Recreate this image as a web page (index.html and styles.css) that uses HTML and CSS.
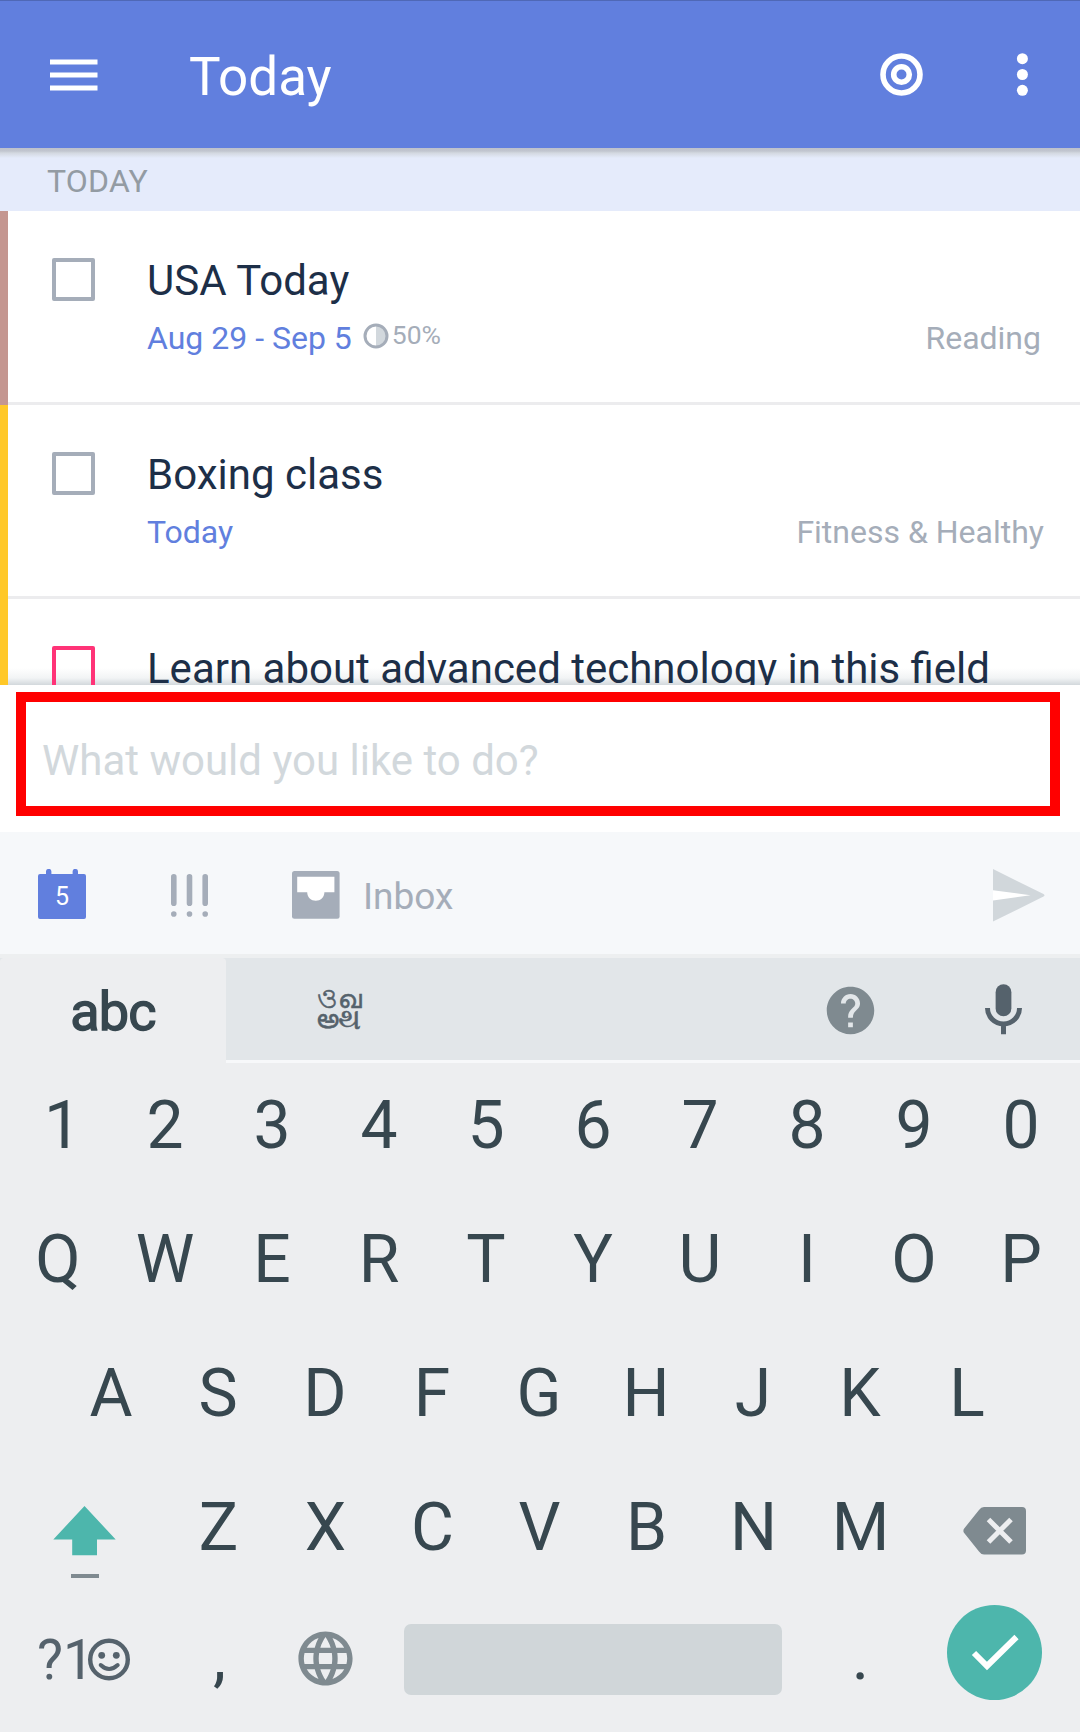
FILE: index.html
```html
<!DOCTYPE html>
<html lang="en">
<head>
<meta charset="utf-8">
<title>Today</title>
<link rel="stylesheet" href="styles.css">
</head>
<body>
<div class="screen">
  <header class="appbar">
    <svg class="menu-icon" width="48" height="32" viewBox="0 0 48 32"><path d="M0 .5h47.500v5H0zM0 13.500h47.500v5H0zM0 26.500h47.500v5H0z" fill="#fff"/></svg>
    <h1 class="title">Today</h1>
    <svg class="focus-icon" width="44" height="44" viewBox="-22.500 -21.500 44 44" fill="none" stroke="#fff" stroke-width="5.600"><circle r="18.500"/><circle r="7.800"/></svg>
    <svg class="more-icon" width="12" height="44" viewBox="-6.400 -21.500 12 44" fill="#fff"><circle cy="-15.800" r="5.500"/><circle r="5.500"/><circle cy="15.800" r="5.500"/></svg>
  </header>

  <main class="list">
    <h2 class="section">TODAY</h2>
    <article class="task task-rose">
      <span class="checkbox"></span>
      <div class="task-body">
        <p class="task-title">USA Today</p>
        <div class="meta">
          <span class="date">Aug 29 - Sep 5</span>
          <svg class="progress-icon" width="26" height="26" viewBox="-13 -13 26 26"><path d="M0-11a11 11 0 0 1 0 22z" fill="#d2d8dd"/><circle r="11" fill="none" stroke="#a5adb9" stroke-width="3"/></svg>
          <span class="percent">50%</span>
          <span class="project project-inset">Reading</span>
        </div>
      </div>
    </article>
    <article class="task task-yellow">
      <span class="checkbox"></span>
      <div class="task-body">
        <p class="task-title">Boxing class</p>
        <div class="meta">
          <span class="date">Today</span>
          <span class="project">Fitness &amp; Healthy</span>
        </div>
      </div>
    </article>
    <article class="task task-yellow task-last">
      <span class="checkbox checkbox-high"></span>
      <div class="task-body">
        <p class="task-title">Learn about advanced technology in this field</p>
      </div>
    </article>
  </main>

  <section class="composer">
    <div class="field">What would you like to do?</div>
  </section>

  <div class="toolbar">
    <div class="calendar">
      <svg width="48" height="50" viewBox="0 0 48 50"><path d="M2 5h6V2.600a2.600 2.600 0 0 1 5.400 0V5h21.200V2.600a2.600 2.600 0 0 1 5.400 0V5h6a2 2 0 0 1 2 2v41a2 2 0 0 1-2 2H2a2 2 0 0 1-2-2V7a2 2 0 0 1 2-2z" fill="#617fde"/></svg>
      <span class="day">5</span>
    </div>
    <svg class="priority" width="37" height="43" viewBox="0 0 37 43" stroke="#a5adb9" stroke-width="5.600" stroke-linecap="round"><path d="M2.800 2.800V29.200M18.500 2.800V29.200M34.200 2.800V29.200M2.800 40v.01M18.500 40v.01M34.200 40v.01"/></svg>
    <svg class="tray" width="48" height="48" viewBox="0 0 48 48"><rect width="47.600" height="47.700" rx="2.500" fill="#a5adb9"/><path d="M5.200 5.800h37.200v15.500h-10c0 5-4 8.500-8.600 8.500s-8.600-3.500-8.600-8.500h-10z" fill="#fff"/></svg>
    <span class="inbox">Inbox</span>
    <svg class="send" width="52" height="53" viewBox="0 0 52 53"><path d="M0 0L50.500 25q2 1.300 0 2.600L0 52.600z" fill="#d1d7db"/><path d="M0 21.200L37.500 26.300 0 31.400z" fill="#fff"/></svg>
  </div>

  <section class="keyboard">
    <div class="tabs">
      <div class="tab-latin">abc</div>
      <div class="tab-rest">
        <div class="indic"><span class="wide">ও</span><span>ഖ</span><span class="wide">అ</span><span class="tall">થ</span></div>
        <svg class="help" width="57" height="57" viewBox="0 0 24 24"><path fill="#7f8a90" d="M12 2C6.480 2 2 6.480 2 12s4.480 10 10 10 10-4.480 10-10S17.520 2 12 2zm1 17h-2v-2h2v2zm2.070-7.750l-.9.920C13.450 12.900 13 13.500 13 15h-2v-.5c0-1.100.45-2.100 1.170-2.830l1.240-1.260c.37-.36.590-.86.590-1.410 0-1.100-.9-2-2-2s-2 .9-2 2H8c0-2.210 1.790-4 4-4s4 1.790 4 4c0 .88-.36 1.680-.93 2.250z"/></svg>
        <svg class="mic" width="63" height="63" viewBox="0 0 24 24" fill="none" stroke="#55626c"><rect x="9" y="2" width="6" height="12.200" rx="3" fill="#55626c" stroke="none"/><path d="M5.900 11a6.100 6.100 0 0 0 12.200 0M12 17v4" stroke-width="1.900"/></svg>
      </div>
    </div>
    <div class="keys">
      <div class="row row-10"><span class="one">1</span><span>2</span><span>3</span><span>4</span><span>5</span><span>6</span><span>7</span><span>8</span><span>9</span><span>0</span></div>
      <div class="row row-10"><span>Q</span><span>W</span><span>E</span><span>R</span><span>T</span><span>Y</span><span>U</span><span>I</span><span>O</span><span>P</span></div>
      <div class="row row-9"><span>A</span><span>S</span><span>D</span><span>F</span><span>G</span><span>H</span><span>J</span><span>K</span><span>L</span></div>
      <div class="row row-shift">
        <span class="shift"><svg width="64" height="74" viewBox="0 0 64 74"><path d="M31.500 0L62.700 33.500H44V49.200H19.200V33.500H.3z" fill="#4db6ac"/><path d="M18 68h28v4h-28z" fill="#7f8a90"/></svg></span>
        <span>Z</span><span>X</span><span>C</span><span>V</span><span>B</span><span>N</span><span>M</span>
        <span><svg class="backspace" width="64" height="48" viewBox="0 0 64 48"><path d="M21 0H59q4 0 4 4V43.500q0 4-4 4H21q-3 0-5-3L.8 25.500Q0 24 .8 22L16 3q2-3 5-3z" fill="#7f8a90"/><path d="M25.500 12.500L48 35M48 12.500L25.500 35" stroke="#edeef0" stroke-width="5"/></svg></span>
      </div>
      <div class="row row-bottom">
        <span class="symbols">?1<svg width="42" height="43" viewBox="-21 -21.500 42 43" fill="none" stroke="#55626c"><circle r="18.800" stroke-width="4.400"/><path d="M-8.300 5.500q8.300 8 17 0" stroke-width="4" stroke-linecap="round"/><circle cx="-7.300" cy="-4.200" r="3.400" fill="#55626c" stroke="none"/><circle cx="7.300" cy="-4.200" r="3.400" fill="#55626c" stroke="none"/></svg></span>
        <span class="comma">,</span>
        <span class="globe"><svg width="65" height="65" viewBox="0 0 24 24"><path fill="#7f8a90" d="M11.990 2C6.470 2 2 6.480 2 12s4.470 10 9.990 10C17.520 22 22 17.520 22 12S17.520 2 11.990 2zm6.930 6h-2.950c-.32-1.250-.78-2.450-1.380-3.560 1.840.63 3.370 1.910 4.330 3.560zM12 4.040c.83 1.200 1.480 2.530 1.910 3.960h-3.820c.43-1.430 1.080-2.760 1.910-3.960zM4.260 14C4.100 13.360 4 12.690 4 12s.1-1.360.26-2h3.380c-.08.66-.14 1.320-.14 2 0 .68.060 1.340.14 2H4.260zm.82 2h2.950c.32 1.250.78 2.450 1.380 3.560-1.840-.63-3.370-1.900-4.330-3.560zm2.950-8H5.080c.96-1.660 2.490-2.930 4.330-3.560C8.810 5.550 8.350 6.750 8.030 8zM12 19.960c-.83-1.200-1.480-2.530-1.910-3.960h3.820c-.43 1.430-1.080 2.760-1.910 3.960zM14.340 14H9.660c-.09-.66-.16-1.320-.16-2 0-.68.070-1.350.16-2h4.680c.09.65.16 1.320.16 2 0 .68-.07 1.340-.16 2zm.25 5.560c.6-1.110 1.060-2.310 1.380-3.560h2.950c-.96 1.650-2.490 2.930-4.330 3.560zM16.360 14c.08-.66.14-1.320.14-2 0-.68-.06-1.340-.14-2h3.380c.16.64.26 1.310.26 2s-.1 1.360-.26 2h-3.380z"/></svg></span>
        <span class="space"></span>
        <span class="period">.</span>
        <span class="enter"><svg width="95" height="95" viewBox="-47.500 -47.500 95 95"><circle r="47.500" fill="#4db6ac"/><path d="M-20.500.5L-7.500 13.500 22-15.500" fill="none" stroke="#fff" stroke-width="6"/></svg></span>
      </div>
    </div>
  </section>
</div>
</body>
</html>
```
FILE: styles.css
```css
* { box-sizing: border-box; }

body {
  margin: 0;
  font-family: Roboto, "Liberation Sans", sans-serif;
  background: #edeef0;
}

h1, h2, p { margin: 0; font-weight: 400; }
svg { display: block; flex: none; }

.screen {
  width: 1080px;
  height: 1732px;
  overflow: hidden;
  display: flex;
  flex-direction: column;
}

/* App bar */
.appbar {
  flex: none;
  height: 148px;
  padding: 0 52px 0 50px;
  display: flex;
  align-items: center;
  background: #617fde;
  border-top: 1px solid #4f68b6;
}
.title {
  margin: 5px auto 0 91px;
  color: #fff;
  font-size: 53px;
  line-height: 62px;
}
.more-icon { margin-left: 93px; }

/* Task list */
.list {
  flex: none;
  height: 537px;
  overflow: hidden;
  background: linear-gradient(#fff 520px, #f2f4f5 530px, #d2d8dc 537px);
}
.section {
  height: 63px;
  padding: 14px 0 0 47px;
  font-size: 32px;
  line-height: 38px;
  letter-spacing: .2px;
  color: #939ba3;
  background: linear-gradient(#bdc1cc 0, #c1c5cf 3px, #d3d8e0 5px, #e5ebfb 10px);
}
.task {
  height: 194px;
  display: flex;
  border-left: 8px solid;
}
.task-rose { border-color: #c49690; }
.task-yellow { border-color: #ffc828; }
.checkbox {
  flex: none;
  width: 43px;
  height: 43px;
  margin: 47px 0 0 44px;
  border: 4px solid #a5adb9;
  border-radius: 2px;
}
.checkbox-high { border-color: #ff3377; }
.task-body {
  flex: 1;
  height: 194px;
  margin-left: -87px;
  padding: 45px 36px 0 139px;
  border-bottom: 3px solid #ececee;
}
.task-last .task-body { border-bottom: 0; }
.task-title {
  color: #1d2f48;
  font-size: 42px;
  line-height: 50px;
  white-space: nowrap;
}
.meta {
  display: flex;
  align-items: center;
  margin-top: 13px;
  font-size: 32px;
  line-height: 38px;
}
.date { color: #617fde; }
.progress-icon { margin: -5px 3px 0 11px; }
.percent {
  margin-top: -7px;
  font-size: 26.500px;
  color: #a5adb9;
}
.project { margin-left: auto; color: #a5adb9; }
.project-inset { margin-right: 3px; }

/* New task field */
.composer {
  flex: none;
  height: 147px;
  padding: 7px 20px 16px 16px;
  background: #fff;
}
.field {
  height: 124px;
  padding: 6px 16px 0;
  border: 10px solid #f00;
  font-size: 42px;
  line-height: 105px;
  color: #d2d8dc;
}

.toolbar {
  flex: none;
  height: 126px;
  padding: 0 34.600px 0 38px;
  display: flex;
  align-items: flex-start;
  background: #f6f8fa;
  border-bottom: 4px solid #edeff0;
}
.calendar { margin-top: 37px; display: grid; }
.calendar > * { grid-area: 1 / 1; }
.day {
  padding-top: 13px;
  text-align: center;
  color: #fff;
  font-size: 25px;
  line-height: 30px;
}
.priority { margin: 42px 0 0 85px; }
.tray { margin: 39px 0 0 84px; }
.inbox {
  margin: 43px 0 0 23px;
  font-size: 37px;
  line-height: 44px;
  color: #a5adb9;
}
.send { margin: 37px 0 0 auto; }

/* Keyboard */
.keyboard { flex: 1; color: #37474f; background: #edeef0; }
.tabs { height: 105px; display: flex; background: #e2e6e9; }
.tab-latin {
  width: 226px;
  text-align: center;
  font-size: 54px;
  line-height: 108px;
  letter-spacing: -.8px;
  -webkit-text-stroke: 1.400px #37474f;
  background: #edeef0;
  border-radius: 4px 4px 0 0;
}
.tab-rest {
  flex: 1;
  display: flex;
  align-items: flex-start;
  border-bottom: 3px solid #f7f8fa;
}
.indic {
  display: grid;
  grid-template-columns: 21px 23px;
  grid-template-rows: 20px 20px;
  justify-items: center;
  margin: 31px auto 0 91px;
  font-size: 26px;
  line-height: 20px;
  color: #55626c;
  -webkit-text-stroke: .5px #55626c;
}
.indic .wide { font-size: 28px; }
.indic .tall { font-size: 30px; }
.help { margin: 24px 93px 0 0; }
.mic { margin: 21px 45px 0 0; }

.keys { display: grid; gap: 10px; }
.row {
  height: 124px;
  padding-top: 2px;
  display: grid;
  align-items: center;
  justify-items: center;
  font-size: 66px;
  line-height: 78px;
}
.row-10 { grid-template-columns: repeat(10, 107px); padding-left: 4.500px; }
.row-9 { grid-template-columns: repeat(9, 107px); padding-left: 57.500px; }
.one { padding-left: 9px; }
.row-shift { grid-template-columns: 161px repeat(7, 107px) 161px; padding-left: 4px; }
.shift { padding-top: 14px; align-self: start; margin-top: 25px; }
.row-shift .backspace { margin-top: 5px; }
.row-bottom {
  grid-template-columns: 161px 107px 107px 428px 107px 161px;
  padding-left: 4px;
}
.symbols {
  display: flex;
  align-items: center;
  justify-self: start;
  margin: -4px 0 0 33px;
  font-size: 55px;
  color: #55626c;
}
.symbols svg { margin: -2px 0 0 -6px; }
.comma, .period { margin-top: -11px; }
.comma { padding-left: 2px; }
.globe { margin: -8px 1px 0 0; }
.space {
  width: 378px;
  height: 71px;
  margin-top: -5px;
  border-radius: 7px;
  background: #d0d6d9;
}
.enter { margin: -20px 1px 0 0; }
```
